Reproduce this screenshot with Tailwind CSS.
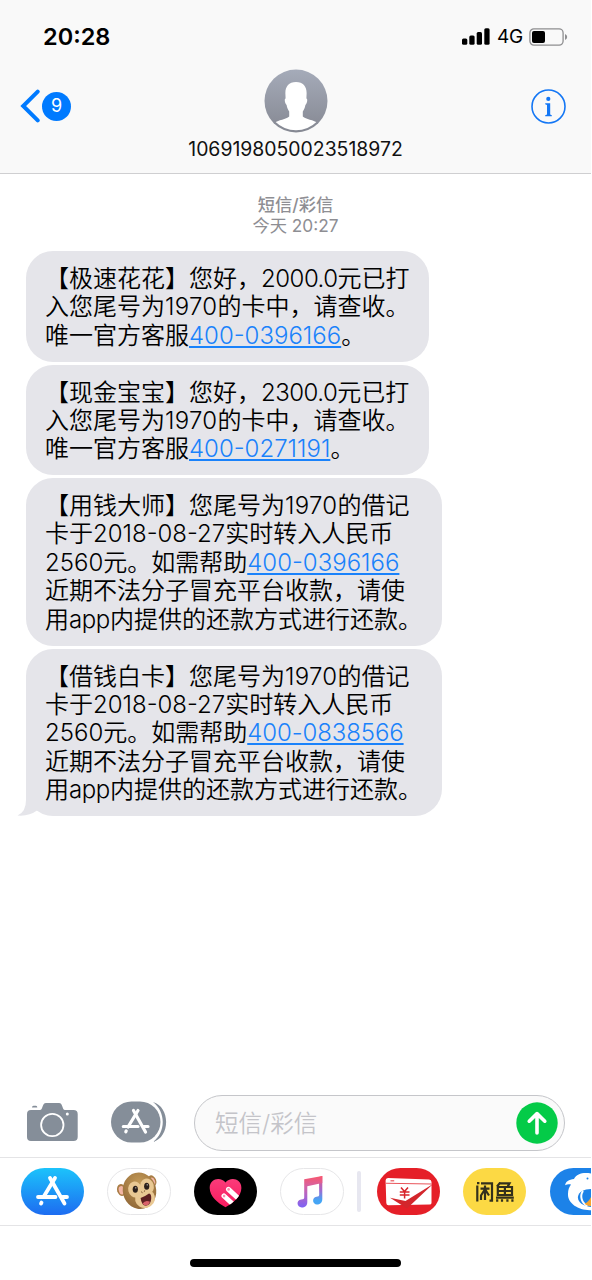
<!DOCTYPE html>
<html lang="zh-CN">
<head>
  <meta charset="UTF-8" />
  <meta name="viewport" content="width=device-width, initial-scale=1.0"/>
  <title>短信/彩信</title>
  <script src="https://cdn.jsdelivr.net/npm/@tailwindcss/browser@4"></script>
</head>
<body class="bg-white w-[591px] h-[1280px] flex flex-col overflow-x-clip text-black font-[Inter,'Noto_Sans_CJK_SC',sans-serif]">

  <!-- Header -->
  <header class="h-[174px] shrink-0 bg-[#f9f9f9] border-b border-[#cfcfd1]">
    <div class="h-[70px] pt-[3px] pl-[43px] pr-[23px] flex items-center justify-between">
      <span class="text-[23.5px] font-semibold leading-none">20:28</span>
      <div class="flex items-center">
        <svg class="w-[28px] h-[17px]" viewBox="0 0 28 17">
          <rect x="0" y="10.5" width="5.3" height="6.3" rx="1.5"/>
          <rect x="7.3" y="7.5" width="5.3" height="9.3" rx="1.5"/>
          <rect x="14.7" y="4" width="5.3" height="12.8" rx="1.5"/>
          <rect x="22.3" y="0.2" width="5.3" height="16.6" rx="1.5"/>
        </svg>
        <span class="ml-[7px] w-[26px] text-[19px] leading-none tracking-[-0.3px]">4G</span>
        <svg class="ml-[6px] w-[39px] h-[18px]" viewBox="0 0 39 18">
          <rect x="0.9" y="0.9" width="33.2" height="16.2" rx="4" fill="none" stroke="#8e8e90" stroke-width="1.3"/>
          <rect x="3" y="3" width="13" height="12" rx="2"/>
          <path d="M36 6 Q38.2 7 38.2 9 Q38.2 11 36 12 Z" fill="#8e8e90"/>
        </svg>
      </div>
    </div>
    <div class="h-[103px] pl-[20px] pr-[25px] grid grid-cols-[120px_1fr_115px]">
      <div class="flex h-[72px] items-center gap-[2px]">
        <svg class="w-[20px] h-[34px]" viewBox="0 0 20 34" fill="none" stroke="#007aff" stroke-width="4" stroke-linecap="round" stroke-linejoin="miter">
          <path d="M17.7 2.6 L3.2 17 L17.7 31.4"/>
        </svg>
        <span class="w-[29px] h-[29px] rounded-full bg-[#007aff] text-white text-[18px] flex items-center justify-center leading-none">9</span>
      </div>
      <div class="flex flex-col items-center">
        <svg class="w-[64px] h-[64px] -mt-px" viewBox="0 0 64 64">
          <defs>
            <linearGradient id="avatar" x1="0" y1="0" x2="0" y2="1">
              <stop offset="0" stop-color="#a5abb9"/>
              <stop offset="1" stop-color="#858892"/>
            </linearGradient>
            <clipPath id="avatarInner"><circle cx="32" cy="31.5" r="29.7"/></clipPath>
          </defs>
          <circle cx="32" cy="32" r="31.5" fill="url(#avatar)"/>
          <path clip-path="url(#avatarInner)" fill="#fff" d="M32 13 C39.5 13 43 18 42.6 25 L42.4 29.5 C43.8 29.5 43.4 34 41.4 36 C41 39 39.8 41 38.8 42.5 L38.8 47.5 C42 50.5 49 50.5 55 54.5 L55 64 L9 64 L9 54.5 C15 50.5 22 50.5 25.2 47.5 L25.2 42.5 C24.2 41 23 39 22.6 36 C20.6 34 20.2 29.5 21.6 29.5 L21.4 25 C21 18 24.5 13 32 13 Z"/>
        </svg>
        <span class="mt-[5px] text-[19.4px] leading-[22px] text-[#111] whitespace-nowrap">1069198050023518972</span>
      </div>
      <div class="flex h-[72px] items-center justify-end">
        <svg class="w-[35px] h-[35px]" viewBox="0 0 35 35">
          <circle cx="17.5" cy="17.5" r="16.5" fill="none" stroke="#1477f5" stroke-width="1.6"/>
          <circle cx="17.3" cy="9.9" r="2.1" fill="#1477f5"/>
          <path fill="#1477f5" d="M14.2 14.3 H19.2 V25.6 L20.8 26.3 V27.3 H14.2 V26.3 L16 25.6 V15.9 L14.2 15.3 Z"/>
        </svg>
      </div>
    </div>
  </header>

  <!-- Conversation -->
  <main class="h-[921px] shrink-0">
    <div class="pt-[21px] text-center text-[17.3px] leading-[20.5px] text-[#8e8e93]">
      <p class="font-medium">短信/彩信</p>
      <p>今天 20:27</p>
    </div>

    <div class="mt-[15px] ml-[26px] flex flex-col items-start gap-[3px] text-[24px] leading-[28.4px] font-[350] whitespace-nowrap">
      <div class="w-[403px] h-[110.5px] pt-[14px] pl-[19px] rounded-[27px] bg-[#e5e5ea]">
        <p>【极速花花】您好，<span class="tracking-[-0.5px]">2000.0</span>元已打</p>
        <p>入您尾号为<span class="tracking-[0.3px]">1970</span>的卡中，请查收。</p>
        <p>唯一官方客服<a class="text-[#1a82fb] underline decoration-[1.6px] underline-offset-[2px]">400-0396166</a>。</p>
      </div>
      <div class="w-[403px] h-[110.5px] pt-[14px] pl-[19px] rounded-[27px] bg-[#e5e5ea]">
        <p>【现金宝宝】您好，<span class="tracking-[-0.5px]">2300.0</span>元已打</p>
        <p>入您尾号为<span class="tracking-[0.3px]">1970</span>的卡中，请查收。</p>
        <p>唯一官方客服<a class="text-[#1a82fb] underline decoration-[1.6px] underline-offset-[2px]">400-0271191</a>。</p>
      </div>
      <div class="w-[415.5px] h-[167.5px] pt-[14px] pl-[19px] rounded-[27px] bg-[#e5e5ea]">
        <p>【用钱大师】您尾号为<span class="tracking-[0.3px]">1970</span>的借记</p>
        <p>卡于2018-08-27实时转入人民币</p>
        <p>2560元。如需帮助<a class="text-[#1a82fb] underline decoration-[1.6px] underline-offset-[2px]">400-0396166</a></p>
        <p>近期不法分子冒充平台收款，请使</p>
        <p>用<span class="tracking-[-0.4px]">app</span>内提供的还款方式进行还款。</p>
      </div>
      <div class="relative w-[415.5px] h-[167.5px] pt-[14px] pl-[19px] rounded-[27px] bg-[#e5e5ea]">
        <svg class="absolute left-[-9px] bottom-0 w-[34px] h-[28px]" viewBox="0 0 34 28">
          <path fill="#e5e5ea" d="M9 0 V12 Q9 24 0.5 27.5 Q12 28.5 20 22.5 L34 20 V0 Z"/>
        </svg>
        <div class="relative">
          <p>【借钱白卡】您尾号为<span class="tracking-[0.3px]">1970</span>的借记</p>
          <p>卡于2018-08-27实时转入人民币</p>
          <p>2560元。如需帮助<a class="tracking-[-0.1px] text-[#1a82fb] underline decoration-[1.6px] underline-offset-[2px]">400-0838566</a></p>
          <p>近期不法分子冒充平台收款，请使</p>
          <p>用<span class="tracking-[-0.4px]">app</span>内提供的还款方式进行还款。</p>
        </div>
      </div>
    </div>
  </main>

  <!-- Input bar -->
  <div class="h-[62px] shrink-0 pl-[27px] flex items-start">
    <svg class="mt-[8px] w-[51px] h-[38px]" viewBox="0 0 51 38">
      <path fill="#858e99" d="M4 7 H13 C16 7 15 0 19 0 H32 C36 0 35 7 38 7 H46.5 Q50.7 7 50.7 11 V34 Q50.7 38 46.5 38 H4 Q0 38 0 34 V11 Q0 7 4 7 Z M5 4.6 Q5 2.8 6.5 2.8 H9 Q10.3 2.8 10.3 4.6 Z"/>
      <circle cx="25.3" cy="22" r="11.2" fill="none" stroke="#fff" stroke-width="1.8"/>
      <circle cx="40.3" cy="11" r="1.5" fill="#fff"/>
    </svg>
    <svg class="ml-[33px] mt-[6px] w-[56px] h-[42px]" viewBox="0 0 56 42">
      <rect x="0" y="0.5" width="49.5" height="41" rx="20.5" fill="#858e99"/>
      <path fill="#858e99" d="M42 1 C59.5 6 59.5 36 42 41 C55 31 55 11 42 1 Z"/>
      <g fill="none" stroke="#fff" stroke-width="3.2" stroke-linecap="round">
        <path d="M22.5 9.5 L34.5 31"/>
        <path d="M27 9.5 L17 26"/>
        <path d="M12.3 25.5 H27 M32.5 25.5 H37"/>
        <path d="M15.2 30 L14.8 30.8"/>
      </g>
    </svg>
    <div class="ml-[27px] w-[371px] h-[56px] pl-[20px] pr-[6px] rounded-full border-[1.5px] border-[#c5c6ca] bg-[#fafafa] flex items-center justify-between">
      <span class="mt-[2px] text-[23.5px] leading-none text-[#c4c4c9] font-[350]">短信/彩信</span>
      <svg class="w-[42px] h-[42px]" viewBox="0 0 42 42">
        <circle cx="21" cy="21" r="20.7" fill="#04cb48"/>
        <path d="M21 31 V12.5 M13.2 19.2 L21 11.6 L28.8 19.2" fill="none" stroke="#fff" stroke-width="3.6" stroke-linecap="round" stroke-linejoin="round"/>
      </svg>
    </div>
  </div>

  <!-- App tray -->
  <div class="h-[69px] shrink-0 border-y border-[#e4e4e6] pl-[21px] pt-[10px] flex items-start overflow-hidden">
    <svg class="shrink-0 w-[63px] h-[47px]" viewBox="0 0 63 47">
      <defs>
        <linearGradient id="store" x1="0" y1="0" x2="0" y2="1">
          <stop offset="0" stop-color="#1cc3fb"/>
          <stop offset="1" stop-color="#1d6cf1"/>
        </linearGradient>
      </defs>
      <rect width="63" height="47" rx="23.5" fill="url(#store)"/>
      <g fill="none" stroke="#fff" stroke-width="3.8" stroke-linecap="round">
        <path d="M29 10 L43.5 35.5"/>
        <path d="M34 10 L22.5 29"/>
        <path d="M17 29 H34.5 M41.5 29 H46"/>
        <path d="M20.5 34.6 L20 35.6"/>
      </g>
    </svg>

    <svg class="ml-[23px] shrink-0 w-[64px] h-[47px]" viewBox="0 0 64 47">
      <defs>
        <radialGradient id="fur" cx="0.55" cy="0.3" r="0.75">
          <stop offset="0" stop-color="#c39a58"/>
          <stop offset="1" stop-color="#8f6636"/>
        </radialGradient>
      </defs>
      <rect x="0.5" y="0.5" width="63" height="46" rx="23" fill="#fff" stroke="#e6e6e8"/>
      <ellipse cx="14.5" cy="22" rx="4.4" ry="6" fill="#a87c44" transform="rotate(-15 14.5 22)"/>
      <ellipse cx="14.6" cy="22.3" rx="2.8" ry="4.3" fill="#f3b6a5" transform="rotate(-15 14.6 22.3)"/>
      <ellipse cx="45" cy="13" rx="4.2" ry="5.8" fill="#a87c44" transform="rotate(-20 45 13)"/>
      <ellipse cx="45.4" cy="13.4" rx="2.6" ry="4" fill="#f3b6a5" transform="rotate(-20 45.4 13.4)"/>
      <ellipse cx="32.5" cy="22.8" rx="16.7" ry="18.3" fill="url(#fur)" transform="rotate(-14 32.5 22.8)"/>
      <g fill="#e9c893">
        <ellipse cx="28" cy="21.5" rx="6.8" ry="8" transform="rotate(-14 28 21.5)"/>
        <ellipse cx="40" cy="18.5" rx="6.8" ry="8" transform="rotate(-14 40 18.5)"/>
        <ellipse cx="38" cy="30.5" rx="10" ry="9.5" transform="rotate(-14 38 30.5)"/>
      </g>
      <ellipse cx="28.3" cy="21.3" rx="2.6" ry="3.5" fill="#2c201b"/>
      <ellipse cx="39.7" cy="18.3" rx="2.6" ry="3.5" fill="#2c201b"/>
      <circle cx="28.8" cy="19.8" r="0.6" fill="#fff"/>
      <circle cx="40.2" cy="16.8" r="0.6" fill="#fff"/>
      <path d="M34.5 24 L35.2 24.5 M37.2 23.3 L37.8 22.8" stroke="#6d4727" stroke-width="1" stroke-linecap="round"/>
      <path fill="#5d1f22" d="M33.6 30 Q38.5 28 42 25.4 Q44.6 25.6 44.2 31 Q43.5 37 39 37.8 Q34.5 37.5 33.6 30 Z"/>
      <path fill="#d9626b" d="M35.5 35.5 Q38.5 31.5 43 33.8 Q41.7 37.3 39 37.6 Q37 37.6 35.5 35.5 Z"/>
    </svg>

    <svg class="ml-[23px] shrink-0 w-[63px] h-[47px]" viewBox="0 0 63 47">
      <defs>
        <linearGradient id="heart" x1="0" y1="0" x2="0" y2="1">
          <stop offset="0" stop-color="#fb3f7d"/>
          <stop offset="1" stop-color="#f8185c"/>
        </linearGradient>
        <clipPath id="heartShape"><path d="M31.5 39.3 C24 35 15.7 28.5 15.7 20 C15.7 9.5 27.5 8.8 31.5 14.5 C35.5 8.8 47.4 9.5 47.4 20 C47.4 28.5 39 35 31.5 39.3 Z"/></clipPath>
      </defs>
      <rect width="63" height="47" rx="23.5"/>
      <g clip-path="url(#heartShape)">
        <rect x="14" y="8" width="36" height="34" fill="url(#heart)"/>
        <g stroke="#fff" stroke-width="5" stroke-linecap="round">
          <path d="M34.5 21.3 L46 32"/>
          <path d="M30 28 L42 39"/>
        </g>
        <circle cx="34.6" cy="21.4" r="1.3" fill="#f98fae"/>
        <circle cx="30.1" cy="28.1" r="1.3" fill="#f98fae"/>
      </g>
    </svg>

    <svg class="ml-[23px] shrink-0 w-[64px] h-[47px]" viewBox="0 0 64 47">
      <defs>
        <linearGradient id="note" x1="0" y1="0" x2="0" y2="1">
          <stop offset="0" stop-color="#f9566c"/>
          <stop offset="0.35" stop-color="#d264a8"/>
          <stop offset="1" stop-color="#7d63f5"/>
        </linearGradient>
        <linearGradient id="noteRight" x1="0" y1="0" x2="0" y2="1">
          <stop offset="0" stop-color="#f25476"/>
          <stop offset="0.5" stop-color="#a06ad0"/>
          <stop offset="0.85" stop-color="#45a5f5"/>
        </linearGradient>
      </defs>
      <rect x="0.5" y="0.5" width="63" height="46" rx="23" fill="#fff" stroke="#e6e6e8"/>
      <path fill="url(#noteRight)" d="M39 9 L42.3 8 V31 C42.3 35 39.8 36.5 37 36.5 C32.3 36.5 31.6 29.6 36.5 28.8 C38.5 28.6 39.2 28.2 39.2 26.6 Z"/>
      <path fill="url(#note)" d="M24.2 11.3 L42.3 8 V15 L27.3 18.2 V34 C27.3 38 24.8 39.5 21.8 39.5 C16.8 39.5 15.8 32.4 21.2 31.6 C23.5 31.3 24.2 31 24.2 29.6 Z"/>
    </svg>

    <div class="ml-[13px] mt-[3px] shrink-0 w-[4px] h-[41px] rounded-sm bg-[#e7e7f0]"></div>

    <svg class="ml-[16px] shrink-0 w-[63px] h-[47px]" viewBox="0 0 63 47">
      <rect width="63" height="47" rx="23.5" fill="#e51f28"/>
      <path fill="#fff" d="M11 10 L52 11.5 Q54.5 11.6 54.5 14 V35 Q54.5 36.6 52.5 36.6 L11.5 37.2 Q9.4 37.2 9.3 35 L8.6 12.5 Q8.6 10 11 10 Z"/>
      <path d="M9 15.2 L54.5 16" stroke="#e9555b" stroke-width="1.1"/>
      <path d="M13.5 12.8 H17.2" stroke="#e9555b" stroke-width="1.2"/>
      <path d="M24 19.5 L27.5 23.5 L31 19.5 M22.8 24 H32.5 M22.8 27 H32.5 M27.6 23.5 V30.5" fill="none" stroke="#d8242b" stroke-width="1.5"/>
      <path fill="#d3262c" d="M13 29.8 L28.5 33 L56 16 L30 40.5 Z"/>
    </svg>

    <div class="ml-[23px] shrink-0 w-[63px] h-[47px] rounded-full bg-[#fcd944] flex items-center justify-center">
      <svg class="w-[38px] h-[20px]" viewBox="0 0 38 20" fill="none" stroke="#33301c" stroke-width="2.2">
        <path d="M1.3 3.4 V19.5 M1 1.2 H3.4 M5 1.4 H16 V18.6 H13.5 M4.5 6.6 H13.5 M9 3.5 V18 M8.5 8 L5 13.5 V18 M9.5 8 L13 13.5"/>
        <path d="M24.5 0.3 L21 4.5 M24 1.4 H33.5 L31.8 4.4 M21.8 5 H36 V13 H21.8 Z M21.8 9 H36 M28.9 5 V13 M20 15.6 H37.8 M21.2 17.2 V19.8 M26 17.2 V19.8 M31.4 17.2 V19.8 M36.4 17.2 V19.8"/>
      </svg>
    </div>

    <svg class="ml-[24px] shrink-0 w-[63px] h-[47px]" viewBox="0 0 63 47">
      <rect width="63" height="47" rx="23.5" fill="#1c82e8"/>
      <path fill="#fff" d="M15.2 17.2 C15.5 13.8 19 11.5 24 11 C27 5.5 34 3.8 43 6 V42 C30 43.5 17.5 36 18 26 C18 22 19.2 19 21 16.6 C19 15.8 17 16.2 15.2 17.2 Z"/>
      <path fill="#1c82e8" d="M43 21 C35 21 29 23 28 28.5 C27.2 33.5 33 39 43 39 Z"/>
      <path fill="none" stroke="#fff" stroke-width="2" d="M33 23 C29.5 28 31.5 35 37.5 38"/>
      <path fill="#f5a32f" d="M34.5 35.8 C38 34.5 40 31.5 42.5 26 V38 C39.5 38.4 37 37.8 34.5 35.8 Z"/>
      <circle cx="37.5" cy="10.5" r="1" fill="#1c82e8"/>
    </svg>
  </div>

  <!-- Home indicator -->
  <div class="flex-1 flex justify-center items-start pt-[33px]">
    <div class="w-[211px] h-[8px] rounded-full bg-black"></div>
  </div>
</body>
</html>
